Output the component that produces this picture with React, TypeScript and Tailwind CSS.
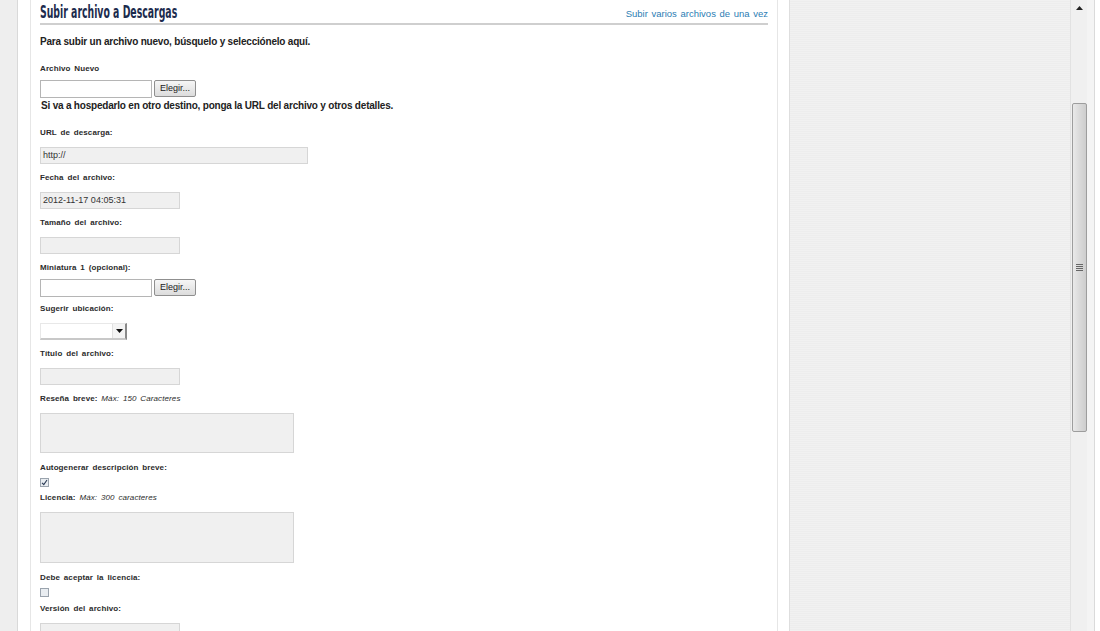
import React from "react";

const sans = { fontFamily: "'Liberation Sans', Arial, sans-serif" };

function Label({ children, className = "" }: { children: React.ReactNode; className?: string }) {
  return (
    <div className={"h-[14px] leading-[14px] text-[8px] font-bold text-[#2b2b2b] tracking-[0.1px] [word-spacing:1.5px] " + className}>
      {children}
    </div>
  );
}

function Field({ w, h = 17, value, className = "" }: { w: string; h?: number; value?: string; className?: string }) {
  return (
    <div
      className={"border border-[#d6d6d6] bg-[#f0f0f0] text-[9px] text-[#333] pl-[2px] flex items-center " + w + " " + className}
      style={{ height: h }}
    >
      {value}
    </div>
  );
}

function FileRow({ className = "" }: { className?: string }) {
  return (
    <div className={"flex items-start gap-[2px] h-[17px] " + className}>
      <div className="w-[112px] h-[18px] border border-[#b5b5b5] bg-white" />
      <div className="w-[42px] h-[17px] border border-[#8f8f8f] rounded-[2px] bg-gradient-to-b from-[#f6f6f6] to-[#dcdcdc] text-[9px] text-[#222] flex items-center justify-center">
        Elegir...
      </div>
    </div>
  );
}

function Check({ checked, className = "" }: { checked?: boolean; className?: string }) {
  return (
    <div className={"w-[9px] h-[9px] border border-[#9aa3ad] bg-[#e9edf1] flex items-center justify-center " + className}>
      {checked && (
        <svg width="7" height="7" viewBox="0 0 7 7">
          <path d="M1 3.8 L2.8 5.6 L6 1" stroke="#2b3b55" strokeWidth="1.1" fill="none" />
        </svg>
      )}
    </div>
  );
}

export default function App() {
  return (
    <div className="flex h-[631px] w-[1100px] overflow-hidden bg-[#efefef]" style={sans}>
      {/* left gray strip */}
      <div className="w-[18px] shrink-0 bg-[#eeeeee] border-r border-[#d9d9d9]" />
      {/* white page panel */}
      <div className="w-[772px] shrink-0 bg-white flex border-r border-[#dedede]">
        <div className="w-[12px] shrink-0" />
        <div className="w-[748px] shrink-0 border-x border-[#e6e6e6] px-[9px]">
          {/* header */}
          <div className="h-[25px] flex items-end justify-between border-b-2 border-[#cfcfcf] pb-[1px]">
            <div
              className="inline-block origin-left scale-x-[0.61] whitespace-nowrap text-[17px] leading-[20px] font-bold text-[#1c2b4d]"
              style={{ fontFamily: "'DejaVu Sans Condensed','DejaVu Sans',sans-serif" }}
            >
              Subir archivo a Descargas
            </div>
            <div className="text-[9.5px] leading-[14px] text-[#2c7db3] [word-spacing:1px] mb-[1px]">
              Subir varios archivos de una vez
            </div>
          </div>

          <div className="mt-[10px] h-[14px] leading-[14px] text-[10px] font-bold text-[#222] tracking-[-0.2px]">
            Para subir un archivo nuevo, búsquelo y selecciónelo aquí.
          </div>

          <Label className="mt-[13px]">Archivo Nuevo</Label>
          <FileRow className="mt-[4px]" />
          <div className="mt-[2px] h-[14px] leading-[14px] text-[10px] font-bold text-[#222] tracking-[-0.2px] pl-[1px]">
            Si va a hospedarlo en otro destino, ponga la URL del archivo y otros detalles.
          </div>

          <Label className="mt-[13px]">URL de descarga:</Label>
          <Field w="w-[268px]" className="mt-[7px]" value="http://" />

          <Label className="mt-[7px]">Fecha del archivo:</Label>
          <Field w="w-[140px]" className="mt-[7px]" value="2012-11-17 04:05:31" />

          <Label className="mt-[7px]">Tamaño del archivo:</Label>
          <Field w="w-[140px]" className="mt-[7px]" />

          <Label className="mt-[7px]">Miniatura 1 (opcional):</Label>
          <FileRow className="mt-[4px]" />

          <Label className="mt-[6px]">Sugerir ubicación:</Label>
          <div className="mt-[7px] w-[87px] h-[17px] flex bg-white border-t border-l border-[#e8e8e8] border-r-2 border-b-2 border-r-[#8a8a8a] border-b-[#c8c8c8]">
            <div className="flex-1" />
            <div className="w-[13px] flex items-center justify-center bg-[#f4f4f4] border-l border-[#e0e0e0]">
              <svg width="7" height="4" viewBox="0 0 7 4">
                <path d="M0 0 L7 0 L3.5 4 Z" fill="#111" />
              </svg>
            </div>
          </div>

          <Label className="mt-[7px]">Título del archivo:</Label>
          <Field w="w-[140px]" className="mt-[7px]" />

          <Label className="mt-[7px]">
            Reseña breve: <span className="italic font-normal">Máx: 150 Caracteres</span>
          </Label>
          <Field w="w-[254px]" h={40} className="mt-[7px]" />

          <Label className="mt-[8px]">Autogenerar descripción breve:</Label>
          <Check checked className="mt-[3px]" />

          <Label className="mt-[4px]">
            Licencia: <span className="italic font-normal">Máx: 300 caracteres</span>
          </Label>
          <Field w="w-[254px]" h={51} className="mt-[7px]" />

          <Label className="mt-[8px]">Debe aceptar la licencia:</Label>
          <Check className="mt-[3px]" />

          <Label className="mt-[5px]">Versión del archivo:</Label>
          <Field w="w-[140px]" className="mt-[7px]" />
        </div>
      </div>

      {/* gray textured background */}
      <div className="w-[280px] shrink-0 bg-[#efefef] bg-[repeating-linear-gradient(0deg,#f1f1f1_0px,#f1f1f1_1px,#ededed_1px,#ededed_2px)]" />

      {/* scrollbar */}
      <div className="w-[17px] shrink-0 bg-[#f0f0f0] border-l border-[#e2e2e2] flex flex-col items-center">
        <div className="h-[16px] flex items-center justify-center">
          <svg width="7" height="4" viewBox="0 0 7 4">
            <path d="M0 4 L7 4 L3.5 0 Z" fill="#222" />
          </svg>
        </div>
        <div className="mt-[87px] w-[15px] h-[329px] rounded-[2px] border border-[#9d9d9d] bg-gradient-to-r from-[#e9e9e9] via-[#dadada] to-[#cdcdcd] flex flex-col items-center justify-center gap-[1px]">
          <div className="w-[7px] h-[1px] bg-[#666]" />
          <div className="w-[7px] h-[1px] bg-[#666]" />
          <div className="w-[7px] h-[1px] bg-[#666]" />
          <div className="w-[7px] h-[1px] bg-[#666]" />
        </div>
      </div>
      <div className="w-[8px] shrink-0 bg-[#f4f4f4] border-r border-[#dadada]" />
      <div className="flex-1 bg-white" />
    </div>
  );
}
